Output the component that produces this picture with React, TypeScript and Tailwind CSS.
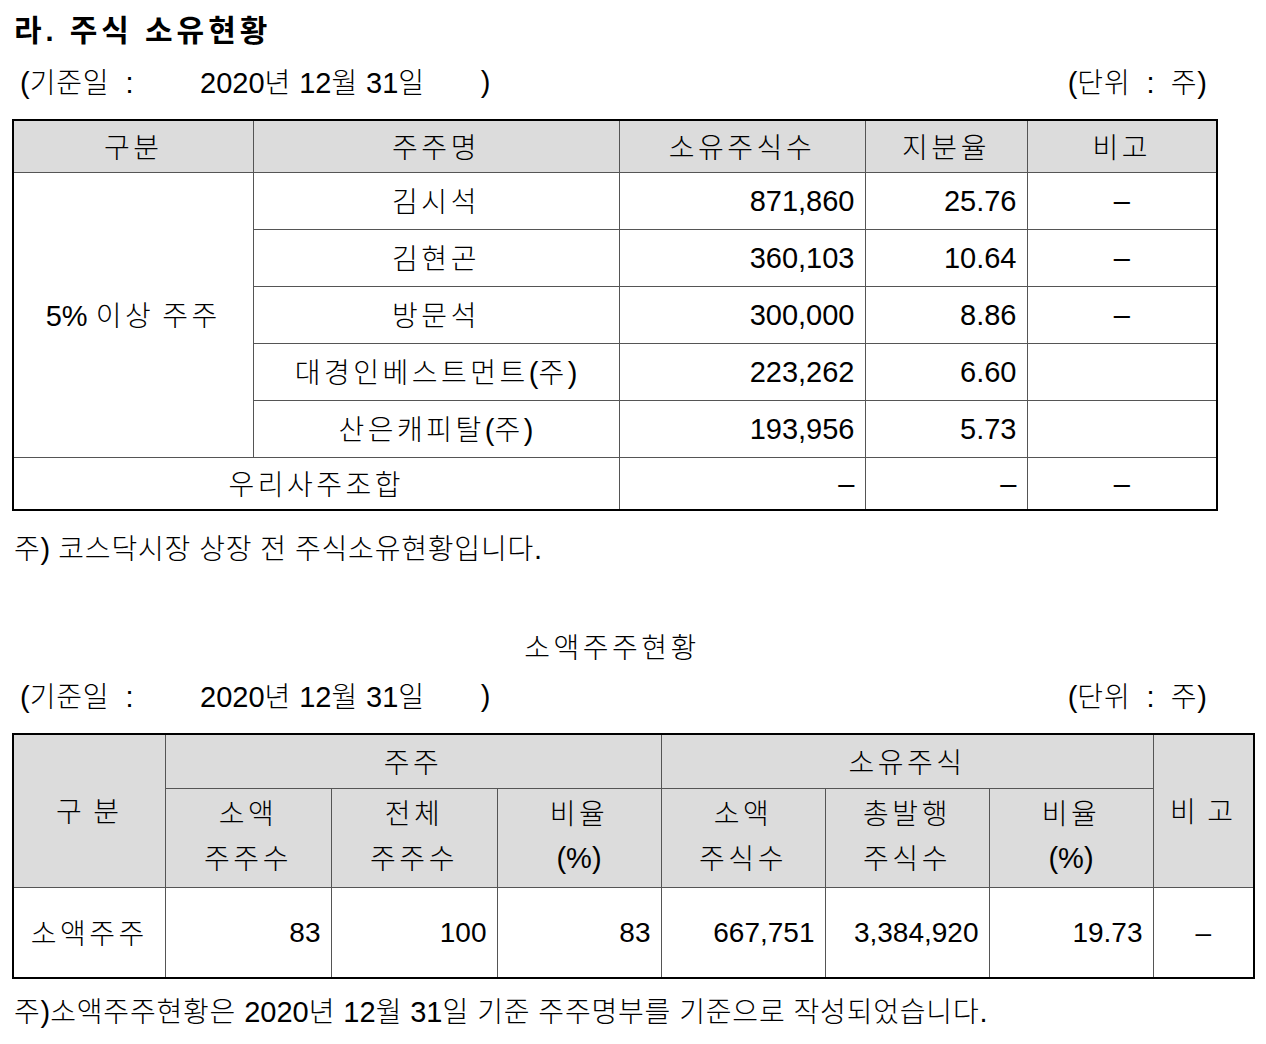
import type { ReactNode } from 'react';

const HANGUL = /([\u1100-\u11FF\u3130-\u318F\uAC00-\uD7AF]+)/;

const KO = "font-['Noto_Sans_CJK_KR',sans-serif] text-[28px] font-light tracking-[0.8px]";
const KO_T = "font-['Noto_Sans_CJK_KR',sans-serif] text-[28px] font-light tracking-[3.5px]";
const KO_B = "font-['Noto_Sans_CJK_KR',sans-serif] text-[30px] font-bold tracking-[4px]";
const EN = "font-['Liberation_Sans',sans-serif] text-[29px]";
const EN_B = "font-['Liberation_Sans',sans-serif] text-[29px] font-bold tracking-[4px]";
const EN_S = "font-['Liberation_Sans',sans-serif] text-[28px]";

// splits a string into hangul / latin runs so each gets its own font size
const Mixed = ({ text, ko = KO, en = EN }: { text: string; ko?: string; en?: string }) => {
    const parts = text.split(HANGUL).filter(Boolean);
    return (
        <>
            {parts.map((p, i) =>
                HANGUL.test(p) ? (
                    <span key={i} className={ko}>{p}</span>
                ) : (
                    <span key={i} className={en}>{p}</span>
                )
            )}
        </>
    );
};

const Th = ({ children, colSpan, rowSpan, className = 'pt-[5px]' }: { children: ReactNode; colSpan?: number; rowSpan?: number; className?: string }) => (
    <th
        colSpan={colSpan}
        rowSpan={rowSpan}
        className={`border border-[#555] bg-[#dcdcdc] px-0 pb-0 text-center align-middle font-normal leading-[32px] ${className}`}
    >
        {children}
    </th>
);

const Td = ({ children, colSpan, rowSpan, className = '' }: { children: ReactNode; colSpan?: number; rowSpan?: number; className?: string }) => (
    <td colSpan={colSpan} rowSpan={rowSpan} className={`border border-[#555] pb-0 pl-0 pt-[5px] align-middle leading-[32px] ${className}`}>
        {children}
    </td>
);

const DateLine = () => (
    <div className="flex h-[40px] w-[1207px] items-center justify-between pl-[20px]">
        <div className="flex h-[40px] items-center">
            <span className="w-[180px] whitespace-pre">
                <Mixed text="(기준일  : " />
            </span>
            <span>
                <Mixed text="2020년 12월 31일" />
            </span>
            <span className="ml-[56px]">
                <Mixed text=")" />
            </span>
        </div>
        <span className="whitespace-pre">
            <Mixed text="(단위  :  주)" />
        </span>
    </div>
);

const holders = [
    { name: '김시석', shares: '871,860', ratio: '25.76', note: '–' },
    { name: '김현곤', shares: '360,103', ratio: '10.64', note: '–' },
    { name: '방문석', shares: '300,000', ratio: '8.86', note: '–' },
    { name: '대경인베스트먼트(주)', shares: '223,262', ratio: '6.60', note: '' },
    { name: '산은캐피탈(주)', shares: '193,956', ratio: '5.73', note: '' },
];

const App = () => {
    return (
        <div className="h-[1044px] w-[1266px] bg-white text-black">
            <div className="mt-[10px] flex h-[40px] items-center whitespace-pre pl-[14px]">
                <div>
                    <Mixed text="라. 주식 소유현황" ko={KO_B} en={EN_B} />
                </div>
            </div>

            <div className="mt-[13px]">
                <DateLine />
            </div>

            <table className="ml-[12px] mt-[16px] w-[1206px] table-fixed border-collapse border-2 border-black">
                <colgroup>
                    <col className="w-[240px]" />
                    <col className="w-[366px]" />
                    <col className="w-[246px]" />
                    <col className="w-[162px]" />
                    <col className="w-[190px]" />
                </colgroup>
                <thead>
                    <tr className="h-[52px]">
                        <Th><Mixed text="구분" ko={KO_T} /></Th>
                        <Th><Mixed text="주주명" ko={KO_T} /></Th>
                        <Th><Mixed text="소유주식수" ko={KO_T} /></Th>
                        <Th><Mixed text="지분율" ko={KO_T} /></Th>
                        <Th><Mixed text="비고" ko={KO_T} /></Th>
                    </tr>
                </thead>
                <tbody>
                    {holders.map((h, i) => (
                        <tr key={h.name} className="h-[57px]">
                            {i === 0 && (
                                <Td rowSpan={5} className="pr-0 text-center">
                                    <Mixed text="5% 이상 주주" ko={KO_T} />
                                </Td>
                            )}
                            <Td className="pr-0 text-center"><Mixed text={h.name} ko={KO_T} /></Td>
                            <Td className="pr-[10px] text-right"><Mixed text={h.shares} /></Td>
                            <Td className="pr-[10px] text-right"><Mixed text={h.ratio} /></Td>
                            <Td className="pr-0 text-center"><Mixed text={h.note} /></Td>
                        </tr>
                    ))}
                    <tr className="h-[53px]">
                        <Td colSpan={2} className="pr-0 text-center"><Mixed text="우리사주조합" ko={KO_T} /></Td>
                        <Td className="pr-[10px] text-right"><Mixed text="–" /></Td>
                        <Td className="pr-[10px] text-right"><Mixed text="–" /></Td>
                        <Td className="pr-0 text-center"><Mixed text="–" /></Td>
                    </tr>
                </tbody>
            </table>

            <div className="mt-[18px] flex h-[40px] items-center pl-[14px]">
                <div>
                    <Mixed text="주) 코스닥시장 상장 전 주식소유현황입니다." />
                </div>
            </div>

            <div className="mt-[57px] flex h-[40px] w-[1224px] items-center justify-center">
                <div>
                    <Mixed text="소액주주현황" ko={KO_T} />
                </div>
            </div>

            <div className="mt-[11px]">
                <DateLine />
            </div>

            <table className="ml-[12px] mt-[16px] w-[1243px] table-fixed border-collapse border-2 border-black">
                <colgroup>
                    <col className="w-[152px]" />
                    <col className="w-[166px]" />
                    <col className="w-[166px]" />
                    <col className="w-[164px]" />
                    <col className="w-[164px]" />
                    <col className="w-[164px]" />
                    <col className="w-[164px]" />
                    <col className="w-[101px]" />
                </colgroup>
                <thead>
                    <tr className="h-[54px]">
                        <Th rowSpan={2}><Mixed text="구 분" ko={KO_T} /></Th>
                        <Th colSpan={3}><Mixed text="주주" ko={KO_T} /></Th>
                        <Th colSpan={3}><Mixed text="소유주식" ko={KO_T} /></Th>
                        <Th rowSpan={2}><Mixed text="비 고" ko={KO_T} /></Th>
                    </tr>
                    <tr className="h-[99px]">
                        {[
                            ['소액', '주주수'],
                            ['전체', '주주수'],
                            ['비율', '(%)'],
                            ['소액', '주식수'],
                            ['총발행', '주식수'],
                            ['비율', '(%)'],
                        ].map(([a, b], i) => (
                            <Th key={i} className="pt-0">
                                <div className="flex h-[45px] items-center justify-center">
                                    <div><Mixed text={a} ko={KO_T} /></div>
                                </div>
                                <div className="flex h-[45px] items-center justify-center">
                                    <div><Mixed text={b} ko={KO_T} /></div>
                                </div>
                            </Th>
                        ))}
                    </tr>
                </thead>
                <tbody>
                    <tr className="h-[91px]">
                        <Td className="pr-0 text-center"><Mixed text="소액주주" ko={KO_T} /></Td>
                        {['83', '100', '83', '667,751', '3,384,920', '19.73'].map((v, i) => (
                            <Td key={i} className="pr-[10px] text-right"><Mixed text={v} en={EN_S} /></Td>
                        ))}
                        <Td className="pr-0 text-center"><Mixed text="–" en={EN_S} /></Td>
                    </tr>
                </tbody>
            </table>

            <div className="mt-[13px] flex h-[40px] items-center pl-[14px]">
                <div>
                    <Mixed text="주)소액주주현황은 2020년 12월 31일 기준 주주명부를 기준으로 작성되었습니다." />
                </div>
            </div>
        </div>
    );
};

export default App;
